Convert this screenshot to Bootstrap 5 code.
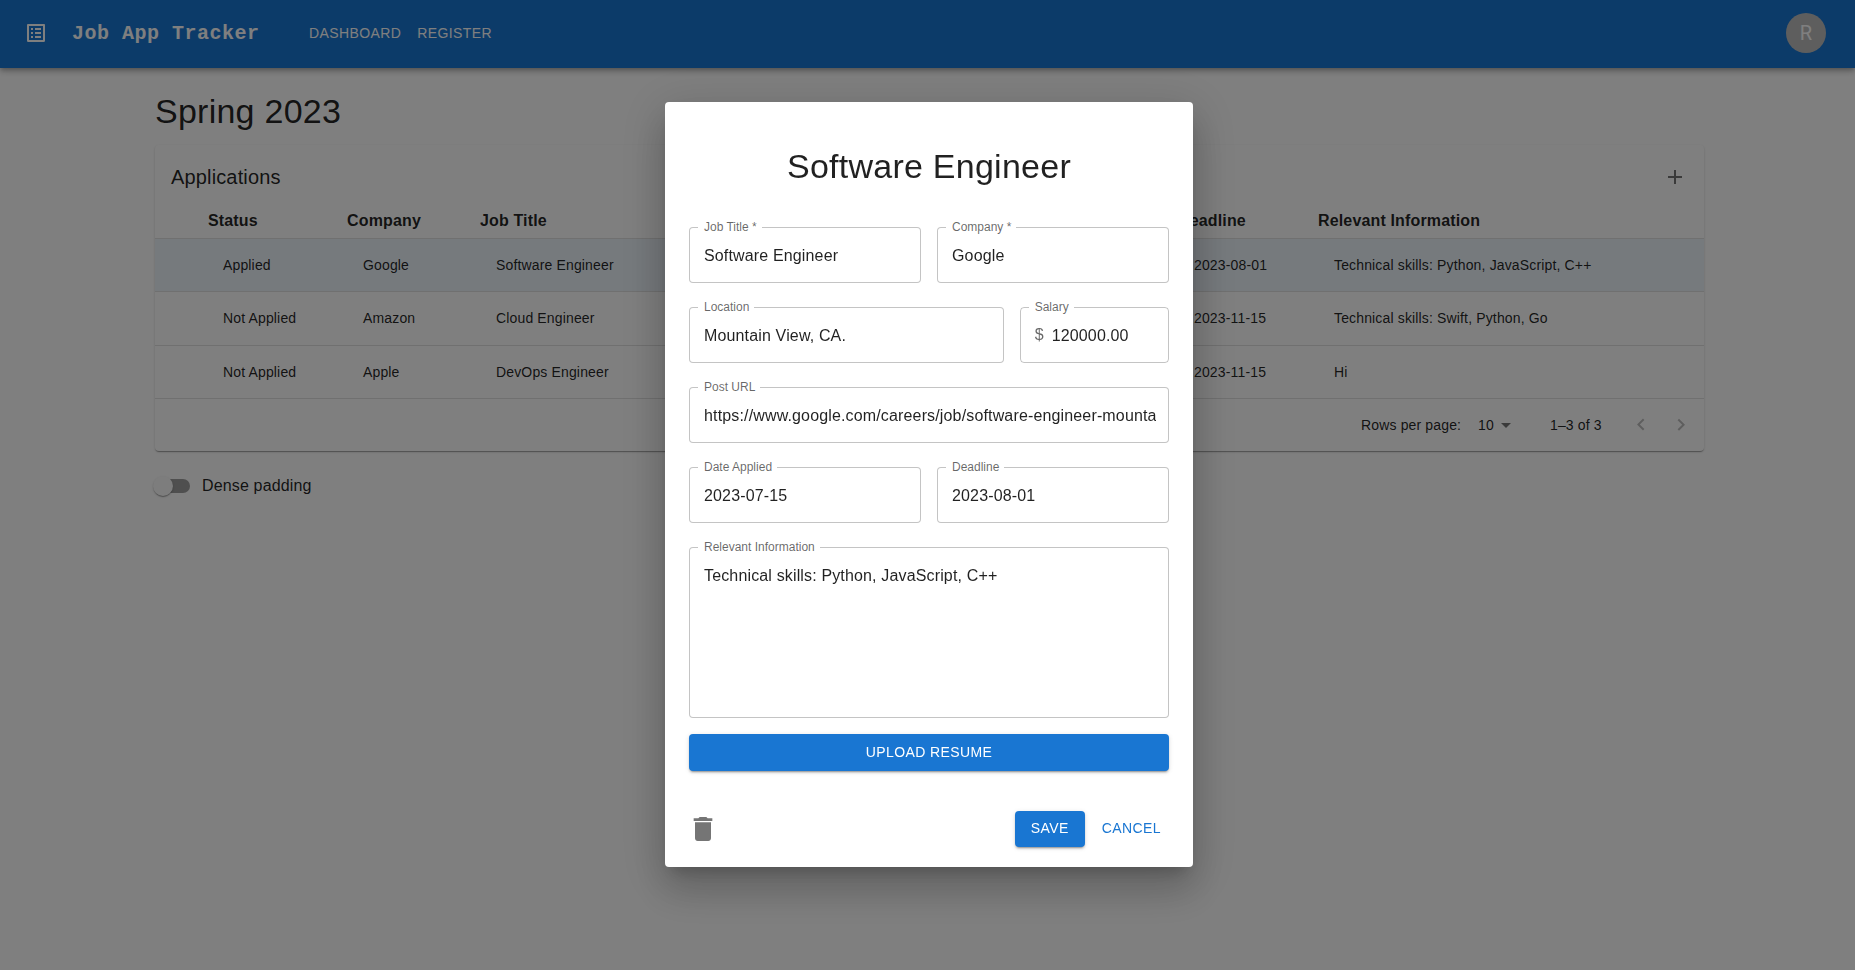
<!DOCTYPE html>
<html lang="en">
<head>
  <meta charset="UTF-8" />
  <title>Job App Tracker</title>
  <link href="https://cdn.jsdelivr.net/npm/bootstrap@5.3.3/dist/css/bootstrap.min.css" rel="stylesheet">
  <style>
    body { font-family: "Liberation Sans", Arial, sans-serif; color: rgba(0,0,0,.87); background: #fff; height: 970px; overflow: hidden; }
    .top-bar { height: 68px; background: #1976d2; padding: 0 29px 2px 24px; box-shadow: 0 2px 4px -1px rgba(0,0,0,.2), 0 4px 5px rgba(0,0,0,.14), 0 1px 10px rgba(0,0,0,.12); }
    .top-bar svg { fill: #fff; }
    .brand-text { font-family: "Liberation Mono", monospace; font-weight: 700; font-size: 20px; letter-spacing: .5px; color: #fff; margin: 2px 0 0 24px; width: 237px; }
    .top-link { font-size: 14px; letter-spacing: .4px; color: #fff; text-transform: uppercase; margin-right: 16px; text-decoration: none; }
    .user-avatar { width: 40px; height: 40px; background: #bdbdbd; color: #fff; font-family: Roboto, sans-serif; font-size: 20px; }
    .page-wrap { width: 1549px; margin-left: 155px; padding-top: 22px; }
    .page-title { font-size: 34px; line-height: 42px; font-weight: 400; letter-spacing: .25px; margin: 0 0 13px; }
    .apps-paper { background: #fff; border-radius: 4px; box-shadow: 0 2px 1px -1px rgba(0,0,0,.2), 0 1px 1px rgba(0,0,0,.14), 0 1px 3px rgba(0,0,0,.12); }
    .apps-toolbar { height: 64px; padding: 0 17px 0 16px; }
    .apps-toolbar h6 { font-size: 20px; font-weight: 400; letter-spacing: .15px; margin: 0; }
    .ico-dim { fill: rgba(0,0,0,.54); flex: none; }
    .ico-off { fill: rgba(0,0,0,.26); flex: none; }
    .apps-table { table-layout: fixed; margin: 0; font-size: 14px; letter-spacing: .15px; --bs-table-color: rgba(0,0,0,.87); }
    .apps-table th { font-size: 16px; font-weight: 700; padding: 1px 16px 6px; border-bottom: 1px solid #e0e0e0; line-height: 22px; white-space: nowrap; }
    .apps-table td { height: 53px; padding: 0 16px 0 32px; vertical-align: middle; border-bottom: 1px solid #e0e0e0; }
    .apps-table tr.row-tall td { height: 54px; }
    .apps-table td:nth-child(2) { padding-left: 31px; }
    .row-picked { --bs-table-bg: #edf4fb; }
    .apps-pager { height: 52px; font-size: 14px; letter-spacing: .15px; }
    .pager-rows { width: 117px; }
    .pager-drop { width: 72px; }
    .pager-range { width: 71px; }
    .pager-nav { width: 40px; }
    .pager-end { padding-right: 3px; }
    .dense-row { padding-top: 16px; margin-left: -10px; }
    .dense-switch { width: 57px; height: 38px; }
    .dense-track { width: 34px; height: 14px; border-radius: 7px; background: rgba(0,0,0,.38); margin-left: 11px; }
    .dense-thumb { width: 20px; height: 20px; border-radius: 50%; background: #fafafa; left: 8px; top: 9px; box-shadow: 0 2px 1px -1px rgba(0,0,0,.2), 0 1px 1px rgba(0,0,0,.14), 0 1px 3px rgba(0,0,0,.12); }
    .dense-label { font-size: 16px; letter-spacing: .15px; }
    .modal { padding: 0 0 2px 3px; }
    .edit-dialog { --bs-modal-width: 528px; }
    .edit-box { border: 0; border-radius: 4px; box-shadow: 0 11px 15px -7px rgba(0,0,0,.2), 0 24px 38px 3px rgba(0,0,0,.14), 0 9px 46px 8px rgba(0,0,0,.12); padding: 43px 24px 20px; }
    .edit-title { font-size: 34px; line-height: 42px; font-weight: 400; letter-spacing: .25px; text-align: center; margin: 0 0 40px; }
    .out-field label { position: absolute; left: 9px; top: -7px; padding: 0 5px 0 6px; background: #fff; font-size: 12px; line-height: 15px; color: rgba(0,0,0,.6); }
    .out-field .form-control { height: 56px; padding: 17px 12px 15px 14px; font-size: 16px; line-height: 23px; letter-spacing: .15px; color: rgba(0,0,0,.87); border: 1px solid rgba(0,0,0,.23); border-radius: 4px; }
    .out-field textarea.form-control { height: 171px; padding: 16px 14px; resize: none; }
    .money-box { padding: 0 14px; height: 56px; border: 1px solid rgba(0,0,0,.23); border-radius: 4px; }
    .money-box span { color: rgba(0,0,0,.6); font-size: 16px; width: 17px; flex: none; }
    .money-box input { border: 0; outline: 0; padding: 0; margin-top: 2px; width: 100%; font-size: 16px; letter-spacing: .15px; color: rgba(0,0,0,.87); font-family: inherit; }
    .btn-blue { background: #1976d2; color: #fff; border: 0; border-radius: 4px; font-size: 14px; line-height: 21px; letter-spacing: .4px; text-transform: uppercase; box-shadow: 0 3px 1px -2px rgba(0,0,0,.2), 0 2px 2px rgba(0,0,0,.14), 0 1px 5px rgba(0,0,0,.12); }
    .btn-blue:hover { background: #1565c0; color: #fff; }
    .upload-btn { height: 37px; margin-top: 16px; }
    .save-btn { width: 70px; height: 36px; padding: 0; }
    .cancel-btn { color: #1976d2; background: none; border: 0; font-size: 14px; letter-spacing: .4px; text-transform: uppercase; padding: 0 8px; height: 36px; margin-left: 9px; }
    .edit-actions { margin-top: 40px; }
    .trash-ico { fill: rgba(0,0,0,.54); margin-left: -2px; }
  </style>
</head>
<body>
  <nav class="top-bar d-flex align-items-center">
    <svg width="24" height="24" viewBox="0 0 24 24"><path d="M11 7h6v2h-6zm0 4h6v2h-6zm0 4h6v2h-6zM7 7h2v2H7zm0 4h2v2H7zm0 4h2v2H7zM20.1 3H3.9c-.5 0-.9.4-.9.9v16.2c0 .4.4.9.9.9h16.2c.4 0 .9-.5.9-.9V3.9c0-.5-.5-.9-.9-.9zM19 19H5V5h14v14z"/></svg>
    <span class="brand-text">Job App Tracker</span>
    <a class="top-link" href="#">Dashboard</a>
    <a class="top-link" href="#">Register</a>
    <div class="user-avatar rounded-circle d-flex align-items-center justify-content-center ms-auto">R</div>
  </nav>

  <div class="page-wrap">
    <h4 class="page-title">Spring 2023</h4>
    <div class="apps-paper">
      <div class="apps-toolbar d-flex align-items-center justify-content-between">
        <h6>Applications</h6>
        <svg class="ico-dim" width="24" height="24" viewBox="0 0 24 24"><path d="M19 13h-6v6h-2v-6H5v-2h6V5h2v6h6v2z"/></svg>
      </div>
      <table class="table apps-table">
        <colgroup>
          <col style="width:37px"><col style="width:139px"><col style="width:133px"><col><col style="width:140px"><col style="width:402px">
        </colgroup>
        <thead>
          <tr><th></th><th>Status</th><th>Company</th><th>Job Title</th><th>Deadline</th><th>Relevant Information</th></tr>
        </thead>
        <tbody>
          <tr class="row-picked"><td></td><td>Applied</td><td>Google</td><td>Software Engineer</td><td>2023-08-01</td><td>Technical skills: Python, JavaScript, C++</td></tr>
          <tr class="row-tall"><td></td><td>Not Applied</td><td>Amazon</td><td>Cloud Engineer</td><td>2023-11-15</td><td>Technical skills: Swift, Python, Go</td></tr>
          <tr><td></td><td>Not Applied</td><td>Apple</td><td>DevOps Engineer</td><td>2023-11-15</td><td>Hi</td></tr>
        </tbody>
      </table>
      <div class="apps-pager d-flex align-items-center justify-content-end pager-end">
        <span class="pager-rows">Rows per page:</span>
        <span class="pager-drop d-flex align-items-center"><span>10</span><svg class="ico-dim" width="24" height="24" viewBox="0 0 24 24"><path d="M7 10l5 5 5-5z"/></svg></span>
        <span class="pager-range">1–3 of 3</span>
        <span class="pager-nav d-flex justify-content-center"><svg class="ico-off" width="24" height="24" viewBox="0 0 24 24"><path d="M15.41 16.09l-4.58-4.59 4.58-4.59L14 5.5l-6 6 6 6z"/></svg></span>
        <span class="pager-nav d-flex justify-content-center"><svg class="ico-off" width="24" height="24" viewBox="0 0 24 24"><path d="M8.59 16.34l4.58-4.59-4.58-4.59L10 5.75l6 6-6 6z"/></svg></span>
      </div>
    </div>
    <div class="dense-row d-flex align-items-center">
      <div class="dense-switch position-relative d-flex align-items-center">
        <div class="dense-track"></div>
        <div class="dense-thumb position-absolute"></div>
      </div>
      <span class="dense-label">Dense padding</span>
    </div>
  </div>

  <div class="modal-backdrop show"></div>
  <div class="modal d-block" tabindex="-1">
    <div class="modal-dialog modal-dialog-centered edit-dialog">
      <div class="modal-content edit-box">
        <h4 class="edit-title">Software Engineer</h4>
        <form>
          <div class="row gx-3 gy-4">
            <div class="col-6"><div class="out-field position-relative"><label>Job Title *</label><input class="form-control" value="Software Engineer"></div></div>
            <div class="col-6"><div class="out-field position-relative"><label>Company *</label><input class="form-control" value="Google"></div></div>
            <div class="col-8"><div class="out-field position-relative"><label>Location</label><input class="form-control" value="Mountain View, CA."></div></div>
            <div class="col-4"><div class="out-field position-relative"><label>Salary</label><div class="money-box d-flex align-items-center"><span>$</span><input value="120000.00"></div></div></div>
            <div class="col-12"><div class="out-field position-relative"><label>Post URL</label><input class="form-control" value="https://www.google.com/careers/job/software-engineer-mountain-view"></div></div>
            <div class="col-6"><div class="out-field position-relative"><label>Date Applied</label><input class="form-control" value="2023-07-15"></div></div>
            <div class="col-6"><div class="out-field position-relative"><label>Deadline</label><input class="form-control" value="2023-08-01"></div></div>
            <div class="col-12"><div class="out-field position-relative"><label>Relevant Information</label><textarea class="form-control">Technical skills: Python, JavaScript, C++</textarea></div></div>
          </div>
          <button type="button" class="btn btn-blue upload-btn w-100 d-block py-0">Upload Resume</button>
          <div class="edit-actions d-flex align-items-center">
            <svg class="trash-ico" width="32" height="32" viewBox="0 0 24 24"><path d="M6 19c0 1.1.9 2 2 2h8c1.1 0 2-.9 2-2V7H6v12zM19 4h-3.5l-1-1h-5l-1 1H5v2h14V4z"/></svg>
            <button type="button" class="btn btn-blue save-btn ms-auto">Save</button>
            <button type="button" class="cancel-btn">Cancel</button>
          </div>
        </form>
      </div>
    </div>
  </div>

  <script src="https://cdn.jsdelivr.net/npm/bootstrap@5.3.3/dist/js/bootstrap.bundle.min.js"></script>
</body>
</html>
